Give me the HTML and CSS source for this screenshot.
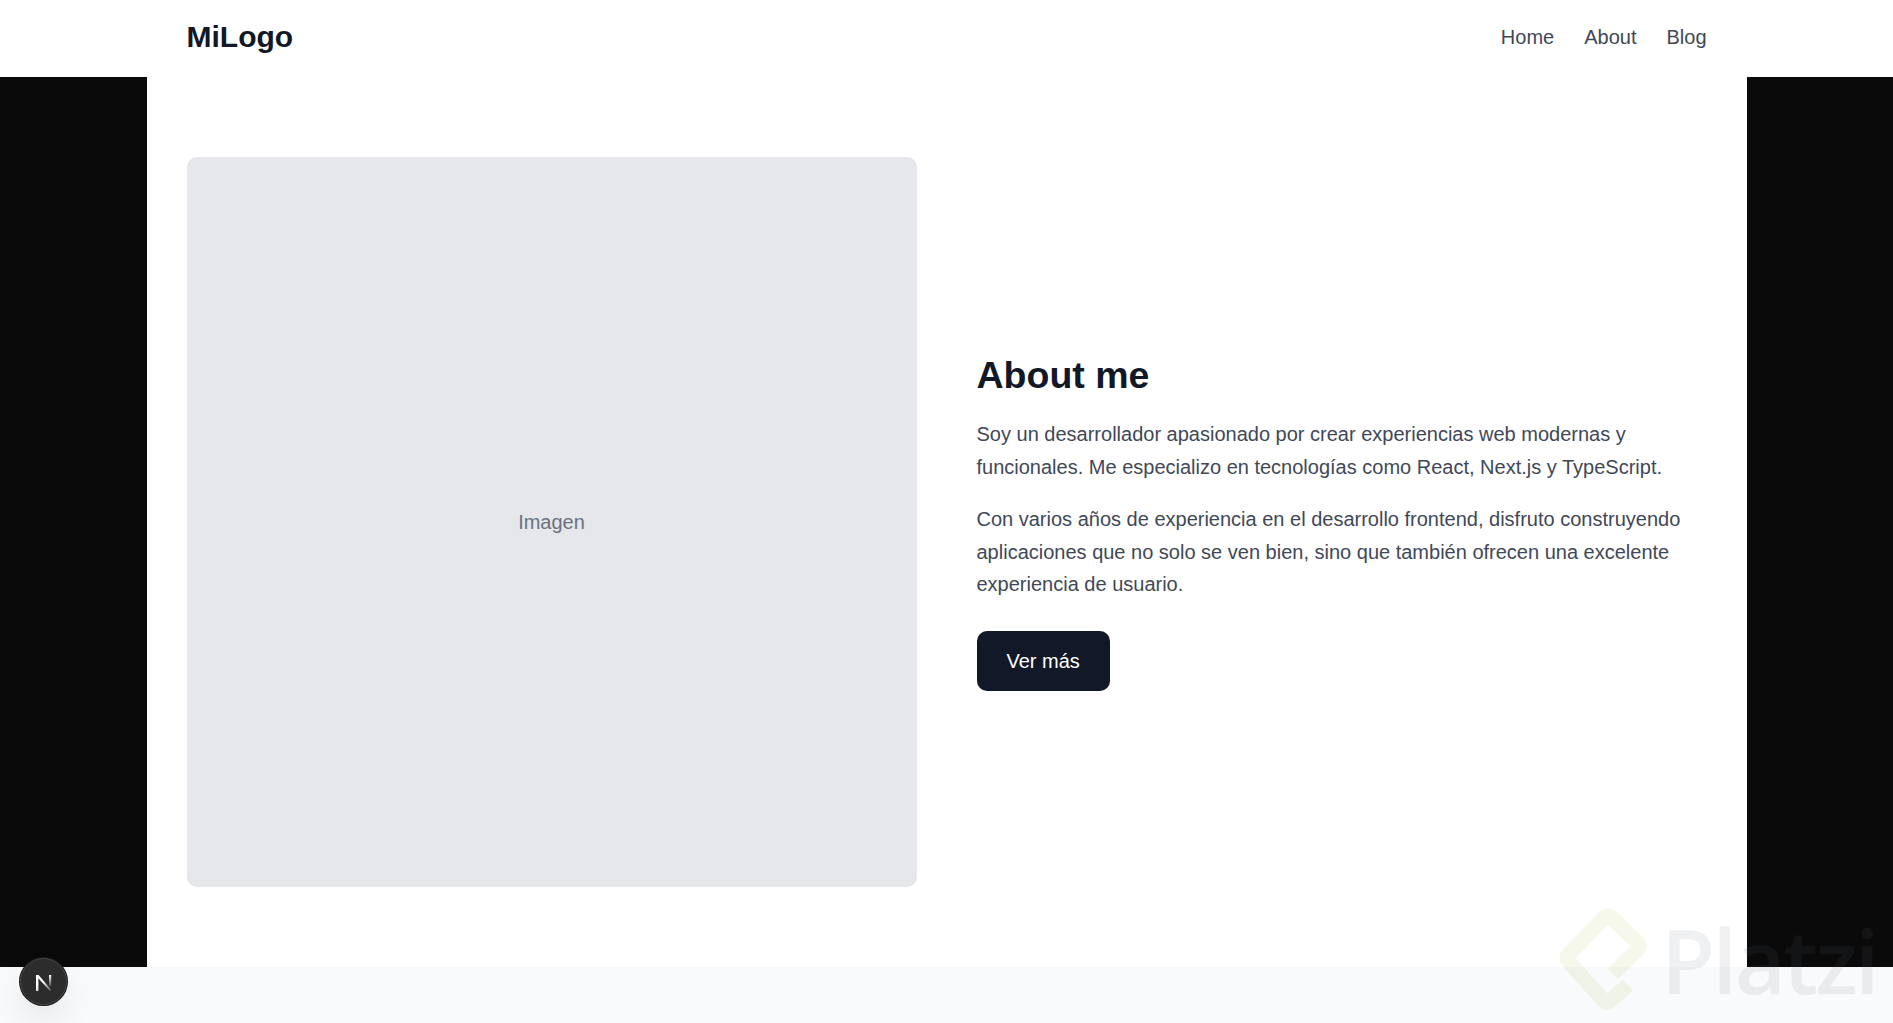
FILE: index.html
```html
<!DOCTYPE html>
<html lang="es">
<head>
<meta charset="utf-8">
<title>MiLogo</title>
<link rel="stylesheet" href="styles.css">
</head>
<body>
<header class="site-header">
  <div class="header-inner">
    <div class="logo">MiLogo</div>
    <nav class="nav">
      <a class="nav-link" href="#">Home</a>
      <a class="nav-link" href="#">About</a>
      <a class="nav-link" href="#">Blog</a>
    </nav>
  </div>
</header>
<main class="main">
  <div class="photo">Imagen</div>
  <section class="about">
    <h1 class="about-title">About me</h1>
    <p class="about-text">Soy un desarrollador apasionado por crear experiencias web modernas y funcionales. Me especializo en tecnologías como React, Next.js y TypeScript.</p>
    <p class="about-text">Con varios años de experiencia en el desarrollo frontend, disfruto construyendo aplicaciones que no solo se ven bien, sino que también ofrecen una excelente experiencia de usuario.</p>
    <a class="button" href="#">Ver más</a>
  </section>
</main>
<footer class="footer"></footer>
<div class="dev-badge">
  <svg class="dev-n" viewBox="0 0 16 16" aria-hidden="true">
    <defs>
      <linearGradient id="nfade" gradientUnits="userSpaceOnUse" x1="7" y1="7" x2="15" y2="16">
        <stop offset="0" stop-color="#fff"/>
        <stop offset="1" stop-color="#fff" stop-opacity="0.15"/>
      </linearGradient>
      <linearGradient id="nbar" x1="0" y1="0" x2="0" y2="1">
        <stop offset="0" stop-color="#fff"/>
        <stop offset="1" stop-color="#fff" stop-opacity="0.15"/>
      </linearGradient>
    </defs>
    <path d="M0 0H2.6L15.4 15 13.8 16 2.4 3.2V16H0Z" fill="url(#nfade)"/>
    <rect x="13" y="0" width="2.2" height="11" fill="url(#nbar)"/>
  </svg>
</div>
<div class="watermark" aria-hidden="true">
  <svg class="watermark-mark" viewBox="0 0 90 107">
    <path d="M55 67 79 43Q83 39 79 35L54 11Q50 7 46 11L11 47Q7 51 11 55L46 94Q49 97 52 94L70 78" fill="none" stroke="#a3be42" stroke-width="15"/>
  </svg>
  <span class="watermark-text">Platzi</span>
</div>
</body>
</html>
```
FILE: styles.css
```css
* { box-sizing: border-box; }
html, body { margin: 0; height: 100%; overflow: hidden; }
body {
  background: #0a0a0a;
  font-family: "Liberation Sans", Arial, sans-serif;
  color: #111827;
}
.site-header { background: #fff; height: 77px; }
.header-inner {
  max-width: 1600px;
  height: 100%;
  margin: 0 auto;
  padding: 0 40px 4px;
  display: flex;
  align-items: center;
  justify-content: space-between;
}
.logo { font-size: 30px; line-height: 36px; font-weight: 700; color: #111827; }
.nav { display: flex; gap: 30px; }
.nav-link { font-size: 20px; line-height: 28px; color: #3f4858; text-decoration: none; }
.main {
  max-width: 1600px;
  height: 890px;
  margin: 0 auto;
  padding: 80px 40px;
  background: #fff;
  display: grid;
  grid-template-columns: 730px 730px;
  gap: 60px;
  align-items: center;
}
.photo {
  height: 730px;
  background: #e5e7eb;
  border-radius: 10px;
  display: flex;
  align-items: center;
  justify-content: center;
  font-size: 20px;
  color: #6b7280;
}
.about { display: flex; flex-direction: column; align-items: flex-start; }
.about-title { margin: 0 0 20px; font-size: 37.5px; line-height: 45px; font-weight: 700; color: #111827; }
.about-text { margin: 0 0 20px; font-size: 20px; line-height: 32.5px; color: #3f4858; }
.button {
  margin-top: 10px;
  padding: 14px 30px;
  background: #111827;
  color: #fff;
  border-radius: 10px;
  font-size: 20px;
  line-height: 32px;
  text-decoration: none;
}
.footer { height: 56px; background: #f9fafb; }
.dev-badge {
  position: fixed;
  left: 20px;
  top: 958px;
  width: 47px;
  height: 47px;
  padding-top: 3px;
  border-radius: 50%;
  background: #2c2c2c;
  border: 1.5px solid #474747;
  box-shadow: 0 0 0 1px #1a1a1a, 0 16px 32px rgba(0, 0, 0, 0.08);
  display: flex;
  align-items: center;
  justify-content: center;
}
.dev-n { width: 16px; height: 16px; }
.watermark {
  position: fixed;
  left: 1558px;
  top: 907px;
  width: 330px;
  height: 107px;
  opacity: 0.105;
  pointer-events: none;
}
.watermark-mark { position: absolute; left: 0; top: 0; width: 90px; height: 107px; }
.watermark-text {
  position: absolute;
  left: 103px;
  top: 3px;
  font-family: "Open Sans", sans-serif;
  font-size: 88px;
  font-weight: 600;
  letter-spacing: -2.5px;
  line-height: 100px;
  color: #6b7280;
}
```
